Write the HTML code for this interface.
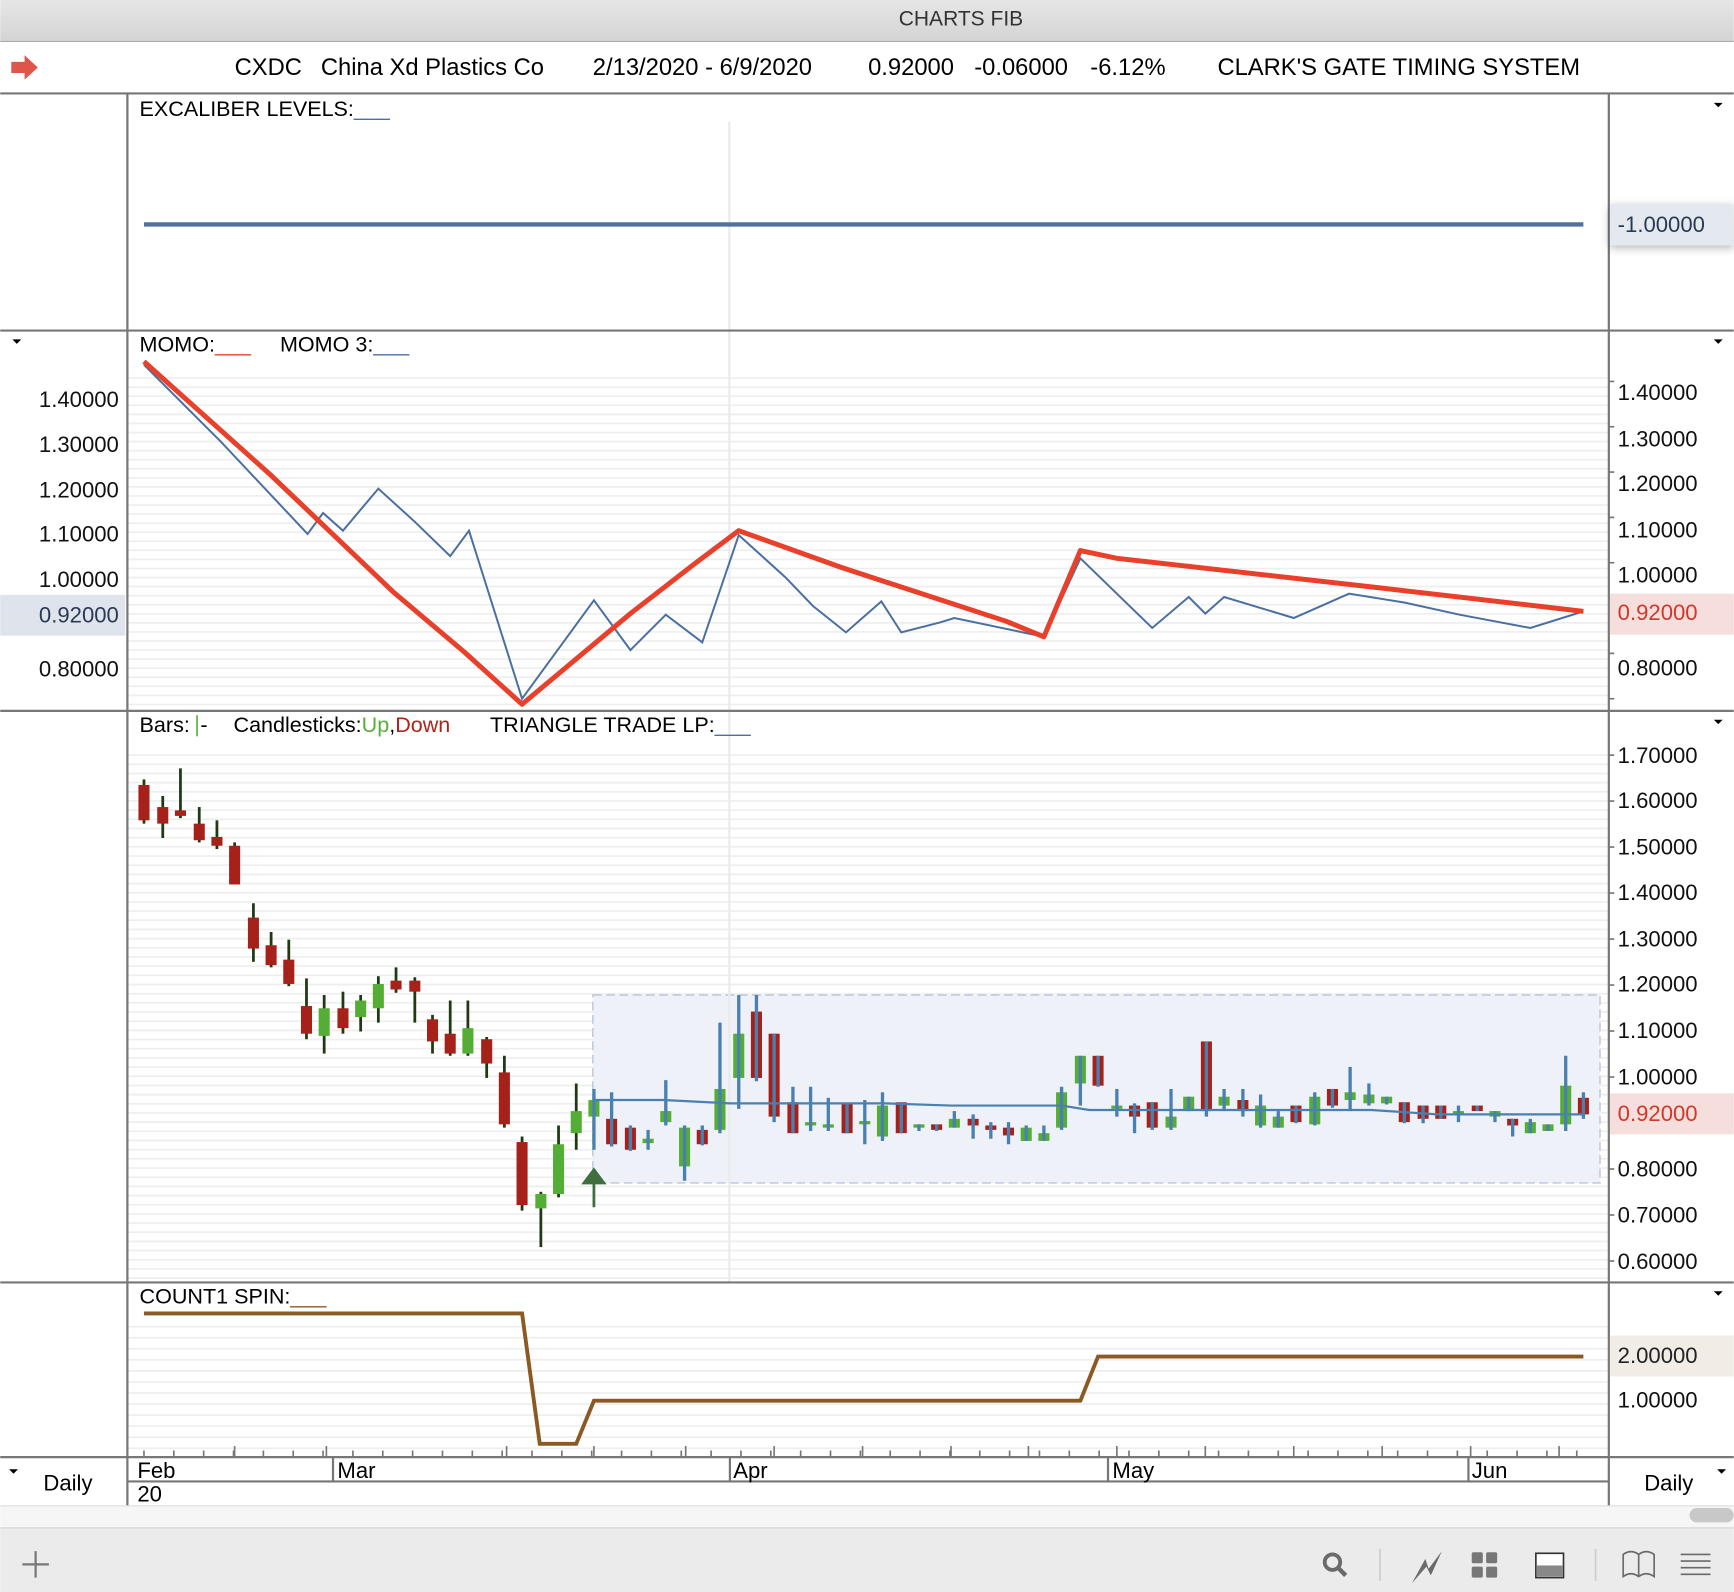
<!DOCTYPE html>
<html><head><meta charset="utf-8">
<style>
html,body{margin:0;padding:0;background:#fff;width:1734px;height:1592px;overflow:hidden}
svg{display:block}
text{font-family:"Liberation Sans",Arial,sans-serif}
</style></head>
<body>
<svg id="s" width="1734" height="1592" viewBox="0 0 1568 1440" xmlns="http://www.w3.org/2000/svg">
<defs>
<linearGradient id="tb" x1="0" y1="0" x2="0" y2="1"><stop offset="0" stop-color="#e6e6e6"/><stop offset="1" stop-color="#d4d4d4"/></linearGradient>
<filter id="sh" x="-20%" y="-50%" width="140%" height="200%"><feDropShadow dx="0" dy="2" stdDeviation="4" flood-color="#000" flood-opacity="0.3"/></filter>
</defs>
<rect x="0" y="0" width="1568" height="37" fill="url(#tb)"/>
<line x1="0" y1="37.5" x2="1568" y2="37.5" stroke="#aaa"/>
<text x="869" y="23" font-size="19" text-anchor="middle" fill="#333">CHARTS FIB</text>
<path d="M10 56 h12 v-6 l12 11 l-12 11 v-6 h-12z" fill="#e0554a"/>
<g font-size="21.5" fill="#000">
<text x="212" y="68">CXDC</text><text x="290" y="68">China Xd Plastics Co</text>
<text x="536" y="68">2/13/2020 - 6/9/2020</text>
<text x="785" y="68">0.92000</text><text x="881" y="68">-0.06000</text><text x="986" y="68">-6.12%</text>
<text x="1101" y="68">CLARK'S GATE TIMING SYSTEM</text>
</g>
<line x1="0" y1="84.5" x2="1568" y2="84.5" stroke="#777" stroke-width="2"/>
<g id="grid"></g>
<rect x="536" y="900" width="911" height="170" fill="#eef1f8" stroke="#c3cde0" stroke-width="1.5" stroke-dasharray="8 4"/>
<line x1="659.5" y1="110" x2="659.5" y2="1160" stroke="#eaeaea" stroke-width="2"/>
<g stroke="#777" stroke-width="2">
<line x1="115" y1="85" x2="115" y2="1362"/>
<line x1="1455" y1="85" x2="1455" y2="1362"/>
<line x1="0" y1="299" x2="1568" y2="299"/>
<line x1="0" y1="643" x2="1568" y2="643"/>
<line x1="0" y1="1160" x2="1568" y2="1160"/>
<line x1="0" y1="1318" x2="1568" y2="1318"/>
<line x1="115" y1="1340" x2="1455" y2="1340"/>
<line x1="301" y1="1318" x2="301" y2="1340"/><line x1="660" y1="1318" x2="660" y2="1340"/>
<line x1="1002" y1="1318" x2="1002" y2="1340"/><line x1="1328" y1="1318" x2="1328" y2="1340"/>
</g>
<g id="ticks" stroke="#777" stroke-width="1.5"></g>
<text x="126" y="105" font-size="19.5">EXCALIBER LEVELS:<tspan fill="#4a6fa0">___</tspan></text>
<line x1="130" y1="203" x2="1432" y2="203" stroke="#52719b" stroke-width="4"/>
<rect x="1456" y="185" width="112" height="37" fill="#e4e8ef" filter="url(#sh)"/>
<text x="1463" y="210" font-size="20" fill="#2a3a55">-1.00000</text>
<g fill="#000"><path d="M1550 93h8l-4 4z"/><path d="M1550 307h8l-4 4z"/><path d="M1550 651h8l-4 4z"/><path d="M1550 1168h8l-4 4z"/><path d="M11 307h8l-4 4z"/><path d="M8 1329h8l-4 4z"/><path d="M1553 1329h8l-4 4z"/></g>
<text x="126" y="318" font-size="19.5">MOMO:<tspan fill="#e8402a">___</tspan></text>
<text x="253" y="318" font-size="19.5">MOMO 3:<tspan fill="#4a6fa0">___</tspan></text>
<g font-size="20" fill="#111">
<text x="35" y="368">1.40000</text><text x="35" y="409">1.30000</text><text x="35" y="450">1.20000</text><text x="35" y="490">1.10000</text><text x="35" y="531">1.00000</text><text x="35" y="612">0.80000</text>
<text x="1463" y="362">1.40000</text><text x="1463" y="404">1.30000</text><text x="1463" y="444">1.20000</text><text x="1463" y="486">1.10000</text><text x="1463" y="527">1.00000</text><text x="1463" y="611">0.80000</text>
</g>
<rect x="0" y="538" width="113" height="37" fill="#dfe4ec"/>
<text x="35" y="563" font-size="20" fill="#2a3a55">0.92000</text>
<rect x="1456" y="537" width="112" height="37" fill="#f6dedc"/>
<text x="1463" y="561" font-size="20" fill="#d0382a">0.92000</text>
<polyline fill="none" stroke="#4a6fa0" stroke-width="1.8" points="130,330 200,400 278,483 292,464 310,480 342,442 375,472 407,503 424,480 472,632 537,543 570,588 602,556 635,581 668,484 710,522 735,548 765,572 797,544 815,572 850,563 863,559 944,576 977,505 1042,568 1075,540 1090,555 1107,540 1170,559 1220,537 1270,545 1320,556 1384,568 1432,553"/>
<polyline fill="none" stroke="#e8402a" stroke-width="4.5" stroke-linejoin="round" points="130,327 245,430 355,535 420,590 472,637 570,555 628,510 668,480 760,513 910,562 944,576 977,498 1010,505 1250,532 1432,553"/>
<text x="126" y="662" font-size="19.5">Bars:</text><line x1="178" y1="647" x2="178" y2="666" stroke="#5aae3a" stroke-width="1.5"/><text x="181" y="662" font-size="19.5">-</text>
<text x="211" y="662" font-size="19.5">Candlesticks:<tspan fill="#5aae3a">Up</tspan>,<tspan fill="#b02418">Down</tspan></text>
<text x="443" y="662" font-size="19.5">TRIANGLE TRADE LP:<tspan fill="#4a6fa0">___</tspan></text>
<g font-size="20" fill="#111">
<text x="1463" y="690">1.70000</text><text x="1463" y="731">1.60000</text><text x="1463" y="773">1.50000</text><text x="1463" y="814">1.40000</text><text x="1463" y="856">1.30000</text><text x="1463" y="897">1.20000</text><text x="1463" y="939">1.10000</text><text x="1463" y="981">1.00000</text><text x="1463" y="1064">0.80000</text><text x="1463" y="1106">0.70000</text><text x="1463" y="1148">0.60000</text>
</g>
<rect x="1456" y="989" width="112" height="37" fill="#f6dedc"/>
<text x="1463" y="1014" font-size="20" fill="#d0382a">0.92000</text>
<g id="candles"></g>
<polyline fill="none" stroke="#4a80b0" stroke-width="2" points="537,995 600,995 660,998 800,998 860,1000 960,1000 985,1004 1240,1004 1300,1008 1432,1008"/>
<path d="M537 1092 V1068 M528 1070 L537 1058 L546 1070Z" stroke="#3f6f3f" stroke-width="2.5" fill="#3f6f3f"/>
<text x="126" y="1179" font-size="19.5">COUNT1 SPIN:<tspan fill="#8a5a20">___</tspan></text>
<rect x="1456" y="1208" width="112" height="37" fill="#f1ece6"/>
<text x="1463" y="1233" font-size="20" fill="#222">2.00000</text>
<text x="1463" y="1273" font-size="20" fill="#111">1.00000</text>
<polyline fill="none" stroke="#8b5a22" stroke-width="3.5" points="130,1188 472,1188 488,1306 521,1306 537,1267 977,1267 993,1227 1432,1227"/>
<g font-size="20"><text x="124" y="1337">Feb</text><text x="124" y="1358">20</text><text x="305" y="1337">Mar</text><text x="663" y="1337">Apr</text><text x="1006" y="1337">May</text><text x="1331" y="1337">Jun</text>
<text x="39" y="1348">Daily</text><text x="1487" y="1348">Daily</text></g>
<rect x="0" y="1362" width="1568" height="20" fill="#f6f6f6"/>
<line x1="0" y1="1362" x2="1568" y2="1362" stroke="#ddd"/>
<rect x="1528" y="1364" width="40" height="13" rx="6.5" fill="#c8c8c8"/>
<rect x="0" y="1382" width="1568" height="58" fill="#ebebeb"/>
<line x1="0" y1="1382" x2="1568" y2="1382" stroke="#d0d0d0"/>
<path d="M32 1403 V1427 M20 1415 H44" stroke="#777" stroke-width="2"/>
<circle cx="1205" cy="1413" r="7" fill="none" stroke="#6a6a6a" stroke-width="3.5"/><line x1="1210" y1="1418" x2="1217" y2="1425" stroke="#6a6a6a" stroke-width="4"/>
<line x1="1248" y1="1401" x2="1248" y2="1430" stroke="#ccc" stroke-width="1.5"/>
<line x1="1443" y1="1401" x2="1443" y2="1430" stroke="#ccc" stroke-width="1.5"/>
<path d="M1277 1432 L1289 1410 L1292 1419 L1304 1403 L1294 1425 L1290 1417Z" fill="#6a6a6a"/>
<g fill="#777"><rect x="1331" y="1404" width="10" height="10" rx="1.5"/><rect x="1344" y="1404" width="10" height="10" rx="1.5"/><rect x="1331" y="1417" width="10" height="10" rx="1.5"/><rect x="1344" y="1417" width="10" height="10" rx="1.5"/></g>
<rect x="1389" y="1405" width="25" height="22" fill="#fff" stroke="#333" stroke-width="1.5"/><rect x="1390" y="1416" width="23" height="10" fill="#888"/>
<path d="M1468 1426 V1406 Q1475 1401 1482 1406 Q1489 1401 1496 1406 V1426 Q1489 1421 1482 1426 Q1475 1421 1468 1426Z M1482 1406 V1426" fill="none" stroke="#6a6a6a" stroke-width="1.5"/>
<g stroke="#6a6a6a" stroke-width="1.5"><line x1="1520" y1="1406" x2="1547" y2="1406"/><line x1="1520" y1="1412" x2="1547" y2="1412"/><line x1="1520" y1="1418" x2="1547" y2="1418"/><line x1="1520" y1="1424" x2="1547" y2="1424"/></g>
</svg>
<script>
var NS="http://www.w3.org/2000/svg";
function el(p,t,a){var e=document.createElementNS(NS,t);for(var k in a)e.setAttribute(k,a[k]);p.appendChild(e);return e;}
var g=document.getElementById('grid');
function hl(y1,y2,st){for(var y=y1;y<y2;y+=st)el(g,'line',{x1:116,y1:y,x2:1454,y2:y,stroke:'#eeeeee','stroke-width':1.5});}
hl(342,640,8.2);hl(683,1158,8.3);hl(1200,1316,10);
var tk=document.getElementById('ticks');
for(var x=130;x<1450;x+=27){el(tk,'line',{x1:x,y1:1312,x2:x,y2:1318});}
[212,295,458,537,620,700,780,860,930,1010,1090,1170,1250,1330,1410].forEach(function(x){el(tk,'line',{x1:x,y1:1308,x2:x,y2:1318});});
for(var y=345;y<640;y+=41)el(tk,'line',{x1:1455,y1:y,x2:1460,y2:y});
for(var y=683;y<1158;y+=41.6)el(tk,'line',{x1:1455,y1:y,x2:1460,y2:y});
var C=[[130,'d',710,742,705,745],[147,'d',730,745,720,758],[163,'d',733,738,695,740],[180,'d',745,760,730,762],[196,'d',757,765,742,768],[212,'d',765,800,762,800],
[229,'d',830,858,817,870],[245,'d',855,873,843,875],[261,'d',868,890,850,892],[277,'d',910,935,885,940],[293,'u',912,937,900,953],[310,'d',912,930,897,935],
[326,'u',905,920,900,933],[342,'u',890,912,883,925],[358,'d',887,895,875,898],[375,'d',887,897,884,925],[391,'d',922,942,918,953],[407,'d',935,953,905,955],
[423,'u',930,953,905,955],[440,'d',940,962,938,975],[456,'d',970,1017,955,1020],[472,'d',1033,1090,1028,1095],[489,'u',1080,1093,1078,1128],[505,'u',1035,1080,1018,1083],
[521,'u',1005,1025,980,1040],[537,'u',995,1010,985,1040],[553,'d',1012,1035,988,1037],[570,'d',1020,1040,1018,1041],[586,'u',1030,1034,1022,1040],[602,'u',1005,1015,977,1018],
[619,'u',1020,1055,1018,1068],[635,'d',1022,1035,1018,1036],[651,'u',985,1022,925,1025],[668,'u',935,975,900,1003],[684,'d',915,975,900,978],[700,'d',935,1010,935,1015],
[717,'d',997,1025,983,1025],[733,'u',1015,1018,983,1023],[749,'u',1017,1020,993,1023],[766,'d',998,1025,998,1025],[782,'u',1014,1017,995,1035],[798,'u',1000,1028,988,1032],
[815,'d',997,1025,997,1025],[831,'u',1017,1020,1017,1023],[847,'d',1017,1022,1017,1023],[863,'u',1012,1020,1005,1020],[880,'d',1012,1018,1008,1030],[896,'d',1018,1022,1015,1030],
[912,'d',1020,1027,1015,1035],[928,'u',1020,1032,1018,1032],[944,'u',1025,1032,1018,1032],[960,'u',988,1020,983,1022],[977,'u',955,980,955,1000],[993,'d',955,982,955,983],
[1010,'u',1000,1003,985,1010],[1026,'d',1000,1010,998,1025],[1042,'d',997,1020,997,1022],[1059,'u',1010,1020,985,1022],[1075,'u',992,1005,992,1005],[1091,'d',942,1005,942,1010],
[1107,'u',992,1000,985,1005],[1124,'d',995,1005,985,1010],[1140,'u',1000,1018,990,1020],[1156,'u',1010,1020,1005,1020],[1172,'d',1000,1015,1000,1016],[1189,'u',992,1017,988,1018],
[1205,'d',985,1000,985,1002],[1221,'u',988,995,965,1005],[1238,'u',990,998,980,1000],[1254,'u',992,998,992,999],[1270,'d',997,1015,997,1016],[1287,'d',1000,1012,1000,1016],
[1303,'d',1000,1012,1000,1012],[1319,'u',1005,1008,1000,1015],[1336,'d',1000,1005,1000,1005],[1352,'u',1005,1010,1005,1015],[1368,'d',1012,1018,1012,1028],[1384,'u',1015,1025,1012,1025],
[1400,'u',1017,1023,1017,1023],[1416,'u',982,1017,955,1023],[1432,'d',993,1008,988,1012]];
var cg=document.getElementById('candles');
C.forEach(function(c){var x=c[0],col=c[1]=='u'?'#54ad34':'#a6211a';var inside=x>=537;
if(!inside)el(cg,'line',{x1:x,y1:c[4],x2:x,y2:c[5],stroke:'#1f3a12','stroke-width':2.5});
el(cg,'rect',{x:x-5,y:c[2],width:10,height:Math.max(2,c[3]-c[2]),fill:col});
if(inside)el(cg,'line',{x1:x,y1:c[4],x2:x,y2:c[5],stroke:'#4a80b0','stroke-width':3});});
</script>
</body></html>
